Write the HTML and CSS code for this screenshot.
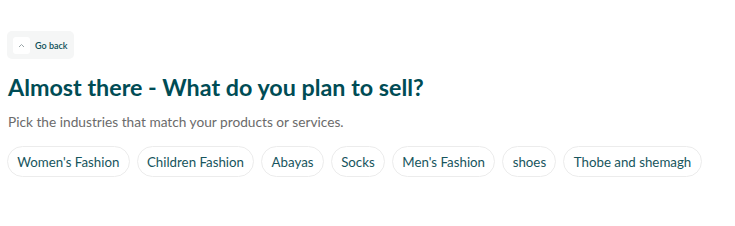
FILE: index.html
```html
<!DOCTYPE html>
<html>
<head>
<meta charset="utf-8">
<link rel="stylesheet" href="styles.css">
</head>
<body>
<div class="page">
  <button class="back">
    <span class="back-icon"><svg width="7" height="5" viewBox="0 0 7 5"><path d="M1 4 L3.5 1.5 L6 4" fill="none" stroke="#9aa5a8" stroke-width="1"/></svg></span>
    <span class="back-text">Go back</span>
  </button>
  <h1 class="title">Almost there - What do you plan to sell?</h1>
  <p class="subtitle">Pick the industries that match your products or services.</p>
  <div class="chips">
    <span class="chip">Women's Fashion</span>
    <span class="chip">Children Fashion</span>
    <span class="chip">Abayas</span>
    <span class="chip">Socks</span>
    <span class="chip">Men's Fashion</span>
    <span class="chip">shoes</span>
    <span class="chip">Thobe and shemagh</span>
  </div>
</div>
</body>
</html>
```
FILE: styles.css
```css
* { box-sizing: border-box; }
html, body { margin: 0; padding: 0; background: #fff; }
body { font-family: Lato, "Noto Sans", sans-serif; }
.page { padding: 31px 7px 0 7px; display: flex; flex-direction: column; align-items: flex-start; }
.back {
  display: flex; align-items: center; gap: 5px;
  height: 28px; padding: 0 6px; border: none; border-radius: 5px;
  background: #f5f6f6; font-family: inherit; cursor: pointer;
}
.back-icon {
  width: 17px; height: 17px; background: #fff; border-radius: 3px;
  display: flex; align-items: center; justify-content: center;
}
.back-text { font-size: 9px; color: #0d4f57; font-weight: 600; }
.title {
  margin: 14px 0 0 1px; font-size: 23.3px; font-weight: 700; color: #004c55; line-height: 28px;
}
.subtitle {
  margin: 12px 0 0 1px; font-size: 13.7px; color: #6b6b6b; line-height: 17px;
}
.chips { display: flex; gap: 7px; margin-top: 16px; flex-wrap: wrap; }
.chip {
  height: 31px; padding: 0 9.3px; border: 1px solid #ececec; border-radius: 16px;
  display: flex; align-items: center; font-size: 13.3px; color: #17555d;
}
```
